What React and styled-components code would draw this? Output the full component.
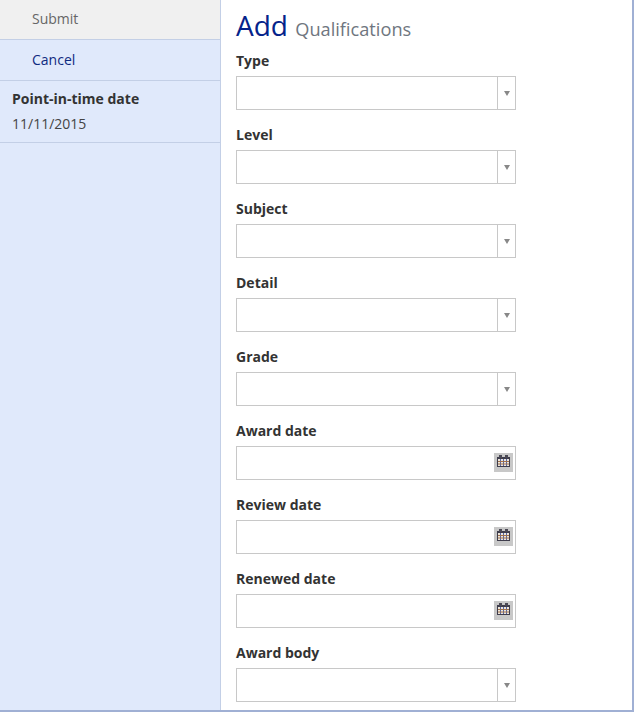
import styled, { createGlobalStyle } from 'styled-components';

const GlobalStyle = createGlobalStyle`
    html, body {
        margin: 0;
        padding: 0;
        background: #fff;
    }
    body {
        font-family: 'Open Sans', 'Liberation Sans', sans-serif;
        font-size: 14px;
        color: #333;
    }
`;

const fields = [
    { label: 'Type', kind: 'select' },
    { label: 'Level', kind: 'select' },
    { label: 'Subject', kind: 'select' },
    { label: 'Detail', kind: 'select' },
    { label: 'Grade', kind: 'select' },
    { label: 'Award date', kind: 'date' },
    { label: 'Review date', kind: 'date' },
    { label: 'Renewed date', kind: 'date' },
    { label: 'Award body', kind: 'select' },
];

function CalendarIcon() {
    return (
        <svg width="13" height="12" viewBox="0 0 13 12">
            <rect x="0" y="2" width="13" height="10" fill="#3f3d4c" />
            <rect x="1" y="4" width="11" height="7" fill="#ece6dc" />
            <rect x="2" y="0" width="3" height="3" fill="#4a4854" />
            <rect x="8" y="0" width="3" height="3" fill="#4a4854" />
            <path d="M3.5 4v7M6.5 4v7M9.5 4v7" stroke="#5566a8" strokeWidth="1" />
            <path d="M1 6.5h11M1 9h11" stroke="#a0704a" strokeWidth="1" />
        </svg>
    );
}

export default function App() {
    return (
        <Page>
            <GlobalStyle />
            <Sidebar>
                <ActionRow $muted>Submit</ActionRow>
                <ActionRow>Cancel</ActionRow>
                <DateBlock>
                    <DateLabel>Point-in-time date</DateLabel>
                    <DateValue>11/11/2015</DateValue>
                </DateBlock>
            </Sidebar>
            <Main>
                <Heading>
                    Add <small>Qualifications</small>
                </Heading>
                {fields.map((field) => (
                    <Field key={field.label}>
                        <Label>{field.label}</Label>
                        <InputBox>
                            {field.kind === 'select' ? (
                                <SelectButton>
                                    <Caret />
                                </SelectButton>
                            ) : (
                                <CalendarButton>
                                    <CalendarIcon />
                                </CalendarButton>
                            )}
                        </InputBox>
                    </Field>
                ))}
            </Main>
        </Page>
    );
}

const Page = styled.div`
    display: flex;
    box-sizing: border-box;
    width: 634px;
    height: 712px;
    overflow: hidden;
    background: #fff;
    border-right: 2px solid #a0b0d4;
    border-bottom: 2px solid #a0b0d4;
`;

const Sidebar = styled.aside`
    box-sizing: border-box;
    flex: 0 0 221px;
    background: #e0e9fb;
    border-right: 1px solid #c3cfe6;
`;

const ActionRow = styled.div`
    box-sizing: border-box;
    height: ${(props) => (props.$muted ? '40px' : '41px')};
    padding: ${(props) => (props.$muted ? '9px' : '10px')} 0 0 32px;
    font-size: 14px;
    line-height: 20px;
    background: ${(props) => (props.$muted ? '#f0f0f0' : 'transparent')};
    color: ${(props) => (props.$muted ? '#666' : '#0f2a80')};
    border-bottom: 1px solid #c3cfe6;
`;

const DateBlock = styled.div`
    box-sizing: border-box;
    height: 62px;
    padding: 8px 12px 0;
    border-bottom: 1px solid #c3cfe6;
`;

const DateLabel = styled.div`
    font-weight: 700;
    line-height: 20px;
    color: #333;
`;

const DateValue = styled.div`
    margin-top: 5px;
    line-height: 20px;
    color: #444;
`;

const Main = styled.main`
    flex: 1;
    padding: 7px 0 0 15px;
`;

const Heading = styled.h1`
    margin: 0;
    height: 37px;
    font-size: 28px;
    font-weight: 400;
    line-height: 36px;
    color: #05238a;

    small {
        font-size: 18.2px;
        color: #6f7680;
    }
`;

const Field = styled.div`
    height: 74px;
`;

const Label = styled.label`
    display: block;
    height: 32px;
    padding-top: 7px;
    box-sizing: border-box;
    font-weight: 700;
    line-height: 20px;
    color: #333;
`;

const InputBox = styled.div`
    display: flex;
    justify-content: flex-end;
    align-items: stretch;
    box-sizing: border-box;
    width: 280px;
    height: 34px;
    background: #fff;
    border: 1px solid #c8c8c8;
`;

const SelectButton = styled.div`
    display: flex;
    align-items: center;
    justify-content: center;
    width: 17px;
    border-left: 1px solid #c8c8c8;
`;

const Caret = styled.span`
    width: 0;
    height: 0;
    border-left: 3px solid transparent;
    border-right: 3px solid transparent;
    border-top: 5px solid #888;
`;

const CalendarButton = styled.div`
    display: flex;
    justify-content: center;
    align-self: center;
    box-sizing: border-box;
    width: 19px;
    height: 19px;
    padding-top: 2px;
    margin-right: 2px;
    margin-top: -1px;
    background: #c8c8c8;
`;
